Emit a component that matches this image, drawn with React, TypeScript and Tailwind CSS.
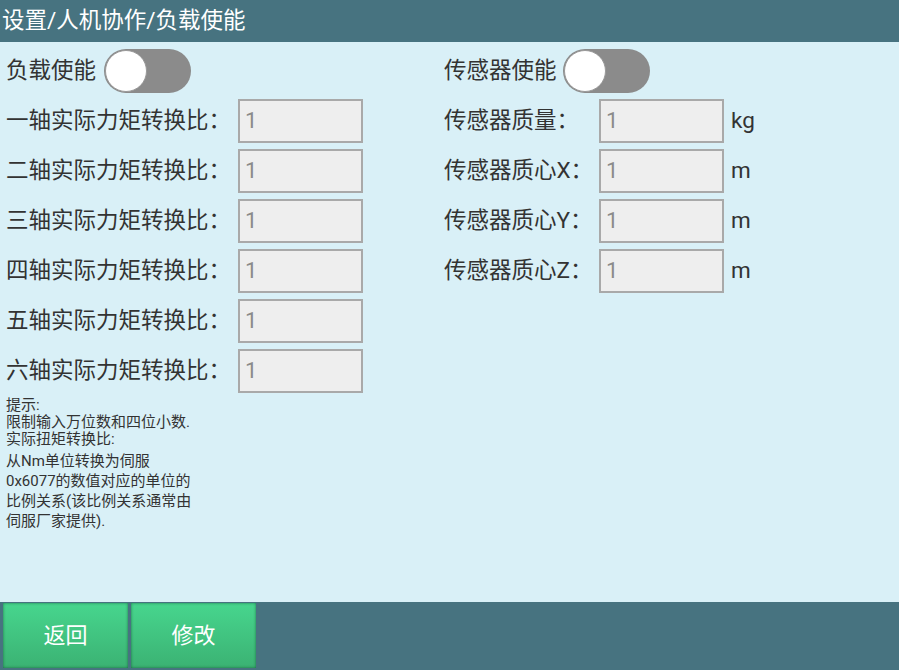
import React from "react";

const FONT = 'Roboto, "Noto Sans CJK SC", sans-serif';

function Toggle() {
  return (
    <div className="relative h-[44px] w-[87px] rounded-full bg-[#8b8b8b]">
      <div className="absolute left-[1px] top-[1px] h-[42px] w-[42px] rounded-full border border-[#9a9a9a] bg-white" />
    </div>
  );
}

function Field() {
  return (
    <div className="flex h-[44px] w-[125px] items-start border-2 border-[#a9a9a9] bg-[#eeeeee] pl-[5px] pt-[5px] text-[22px] leading-[30px] text-[#8a8a8a]">
      1
    </div>
  );
}

const axes = ["一", "二", "三", "四", "五", "六"];
const sensors: [string, string][] = [
  ["传感器质量：", "kg"],
  ["传感器质心X：", "m"],
  ["传感器质心Y：", "m"],
  ["传感器质心Z：", "m"],
];

export default function App() {
  return (
    <div
      className="flex h-[670px] w-[899px] flex-col bg-[#d9f0f7] text-[#333333]"
      style={{ fontFamily: FONT }}
    >
      <header className="flex h-[42px] items-center bg-[#477380] pl-[2px] text-[22.5px] text-white">
        设置/人机协作/负载使能
      </header>

      <main className="flex flex-1 pt-[7px]">
        {/* left column: load switch and per-axis torque ratios */}
        <section className="flex w-[444px] flex-col gap-[6px] pl-[6px]">
          <div className="flex h-[44px] items-center">
            <span className="w-[98px] text-[22.5px]">负载使能</span>
            <Toggle />
          </div>
          {axes.map((a) => (
            <div key={a} className="flex h-[44px] items-center">
              <span className="w-[232px] text-[22.5px]">{a}轴实际力矩转换比：</span>
              <Field />
            </div>
          ))}
          <div className="mt-[-3px] text-[15px] leading-[18px]">
            <div>提示:</div>
            <div className="leading-[17px]">限制输入万位数和四位小数.</div>
            <div className="leading-[17px]">实际扭矩转换比:</div>
            <div className="mt-[3px] leading-[20px]">
              <div>从Nm单位转换为伺服</div>
              <div>0x6077的数值对应的单位的</div>
              <div>比例关系(该比例关系通常由</div>
              <div>伺服厂家提供).</div>
            </div>
          </div>
        </section>

        {/* right column: sensor switch and sensor parameters */}
        <section className="flex flex-col gap-[6px]">
          <div className="flex h-[44px] items-center">
            <span className="w-[119px] text-[22.5px]">传感器使能</span>
            <Toggle />
          </div>
          {sensors.map(([label, unit]) => (
            <div key={label} className="flex h-[44px] items-center">
              <span className="w-[155px] text-[22.5px]">{label}</span>
              <Field />
              <span className="ml-[7px] text-[22.5px]">{unit}</span>
            </div>
          ))}
        </section>
      </main>

      <footer className="flex h-[68px] gap-[3px] bg-[#477380] pl-[3px] pt-[1px]">
        {["返回", "修改"].map((t) => (
          <button
            key={t}
            className="flex h-[65px] w-[125px] items-center justify-center bg-gradient-to-b from-[#47d68e] to-[#3bb273] text-[22px] text-white shadow-[inset_0_0_3px_rgba(0,60,30,0.6)]"
          >
            {t}
          </button>
        ))}
      </footer>
    </div>
  );
}
